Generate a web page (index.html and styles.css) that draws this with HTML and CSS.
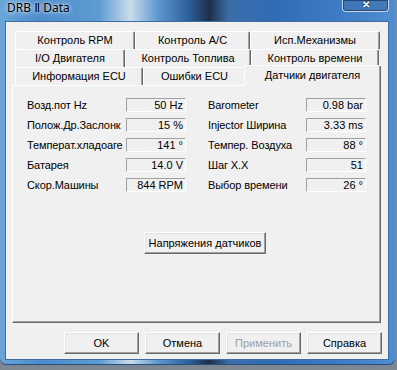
FILE: index.html
```html
<!DOCTYPE html>
<html lang="ru">
<head>
    <meta charset="UTF-8">
    <title>DRB II Data</title>
    <link rel="stylesheet" href="styles.css">
</head>
<body>

    <div class="window">
        <!-- Title bar -->
        <div class="titlebar">
            <span class="title">DRB Ⅱ Data</span>
            <span class="close-btn">✕</span>
        </div>

        <div class="client">
            <!-- Tabs -->
            <div class="tabs">
                <div class="tab-row">
                    <div class="tab w120">Контроль RPM</div>
                    <div class="tab w115">Контроль A/C</div>
                    <div class="tab w130">Исп.Механизмы</div>
                </div>
                <div class="tab-row">
                    <div class="tab w110">I/O Двигателя</div>
                    <div class="tab w126">Контроль Топлива</div>
                    <div class="tab w128">Контроль времени</div>
                </div>
                <div class="tab-row">
                    <div class="tab w128">Информация ECU</div>
                    <div class="tab w103">Ошибки ECU</div>
                    <div class="tab tab-active">Датчики двигателя</div>
                </div>

                <div class="panel">
                    <div class="fields">
                        <div class="col">
                            <div class="field"><span class="label">Возд.пот Hz</span><span class="value">50 Hz</span></div>
                            <div class="field"><span class="label">Полож.Др.Заслонк</span><span class="value">15 %</span></div>
                            <div class="field"><span class="label">Температ.хладоаге</span><span class="value">141 °</span></div>
                            <div class="field"><span class="label">Батарея</span><span class="value">14.0 V</span></div>
                            <div class="field"><span class="label">Скор.Машины</span><span class="value">844 RPM</span></div>
                        </div>
                        <div class="col col-right">
                            <div class="field"><span class="label">Barometer</span><span class="value">0.98 bar</span></div>
                            <div class="field"><span class="label">Injector Ширина</span><span class="value">3.33 ms</span></div>
                            <div class="field"><span class="label">Темпер. Воздуха</span><span class="value">88 °</span></div>
                            <div class="field"><span class="label">Шаг Х.Х</span><span class="value">51</span></div>
                            <div class="field"><span class="label">Выбор времени</span><span class="value">26 °</span></div>
                        </div>
                    </div>
                    <button class="btn btn-wide" type="button">Напряжения датчиков</button>
                </div>
            </div>

            <!-- Dialog buttons -->
            <div class="dialog-buttons">
                <button class="btn" type="button">OK</button>
                <button class="btn" type="button">Отмена</button>
                <button class="btn btn-disabled" type="button">Применить</button>
                <button class="btn" type="button">Справка</button>
            </div>
        </div>
    </div>

</body>
</html>
```

FILE: styles.css
```css
/* Reset */
* {
    margin: 0;
    padding: 0;
    box-sizing: border-box;
}

body {
    background: #7d8791;
    font-family: 'Liberation Sans', Arial, sans-serif;
    font-size: 11px;
    color: #000;
    width: 397px;
    height: 370px;
    overflow: hidden;
}

/* Window frame (aero glass) */
.window {
    width: 395px;
    height: 365px;
    padding: 0 6px 5px 5px;
    border-radius: 0 0 6px 6px;
    display: flex;
    flex-direction: column;
    background: linear-gradient(to right, #6aa6d8 0%, #4b8ccc 10%, #5e9bd2 25%, #c8dcea 33%, #5d98cf 40%, #2c5e9a 48%, #1e2f48 53%, #3b6ea8 58%, #2f6cb6 70%, #3d7cc4 85%, #4e8dd0 100%);
    box-shadow: inset 0 -1px 0 #2a4f7c;
}

.titlebar {
    height: 21px;
    display: flex;
    justify-content: space-between;
    align-items: flex-start;
}

.title {
    font-family: 'Noto Sans', 'DejaVu Sans', sans-serif;
    font-size: 12px;
    line-height: 16px;
    padding: 0 0 0 2px;
    color: #000;
    text-shadow: 0 0 6px rgba(255, 255, 255, 0.9), 0 0 3px rgba(255, 255, 255, 0.8);
}

.close-btn {
    width: 47px;
    height: 12px;
    border: 1px solid rgba(255, 255, 255, 0.7);
    border-top: none;
    border-radius: 0 0 4px 4px;
    background: rgba(60, 110, 170, 0.55);
    box-shadow: inset 0 0 0 1px rgba(20, 40, 70, 0.6);
    color: #fff;
    font-size: 10px;
    font-weight: bold;
    line-height: 9px;
    text-align: center;
    text-shadow: 0 0 2px #000;
}

/* Client area */
.client {
    flex: 1;
    background: #f0f0f0;
    border: 1px solid #3f6d9e;
    padding: 9px 6px 0 6px;
    display: flex;
    flex-direction: column;
}

/* Tabs */
.tabs {
    width: 369px;
}

.tab-row {
    display: flex;
    height: 18px;
    padding-left: 3px;
}

.tab {
    height: 18px;
    border-top: 1px solid #fff;
    border-left: 1px solid #fff;
    border-right: 1px solid #696969;
    border-radius: 2px 2px 0 0;
    box-shadow: inset -1px 0 0 #a0a0a0;
    background: #f0f0f0;
    text-align: center;
    line-height: 16px;
    white-space: nowrap;
}

.w103 { width: 103px; }
.w110 { width: 110px; }
.w115 { width: 115px; }
.w120 { width: 120px; }
.w126 { width: 126px; }
.w128 { width: 128px; }
.w130 { width: 130px; }

.tab-active {
    position: relative;
    z-index: 2;
    width: 137px;
    height: 21px;
    margin: -2px 0 -1px -2px;
    line-height: 18px;
}

/* Tab page */
.panel {
    height: 238px;
    border-top: 1px solid #fff;
    border-left: 1px solid #fff;
    border-right: 1px solid #696969;
    border-bottom: 1px solid #696969;
    box-shadow: inset -1px -1px 0 #a0a0a0;
    background: #f0f0f0;
    padding: 9px 0 0 14px;
}

.fields {
    display: flex;
    gap: 22px;
}

.col {
    display: flex;
    flex-direction: column;
}

.field {
    display: flex;
    align-items: center;
    height: 20px;
}

.label {
    width: 99px;
    white-space: nowrap;
    letter-spacing: -0.1px;
}

.col-right .label {
    width: 98px;
}

.value {
    width: 60px;
    height: 14px;
    border-top: 1px solid #a0a0a0;
    border-left: 1px solid #a0a0a0;
    border-bottom: 1px solid #fff;
    border-right: 1px solid #fff;
    text-align: right;
    padding-right: 2px;
    line-height: 12px;
    white-space: nowrap;
}

/* Buttons */
.btn {
    width: 75px;
    height: 22px;
    font-family: 'Liberation Sans', Arial, sans-serif;
    font-size: 11px;
    color: #000;
    background: #f0f0f0;
    border-top: 1px solid #fff;
    border-left: 1px solid #fff;
    border-right: 1px solid #696969;
    border-bottom: 1px solid #696969;
    box-shadow: inset -1px -1px 0 #a0a0a0, inset 1px 1px 0 #e3e3e3;
}

.btn-wide {
    width: 122px;
    margin: 37px 0 0 117px;
}

.btn-disabled {
    color: #a0a0a0;
}

.dialog-buttons {
    display: flex;
    justify-content: flex-end;
    gap: 6px;
    margin-top: 9px;
}
```
